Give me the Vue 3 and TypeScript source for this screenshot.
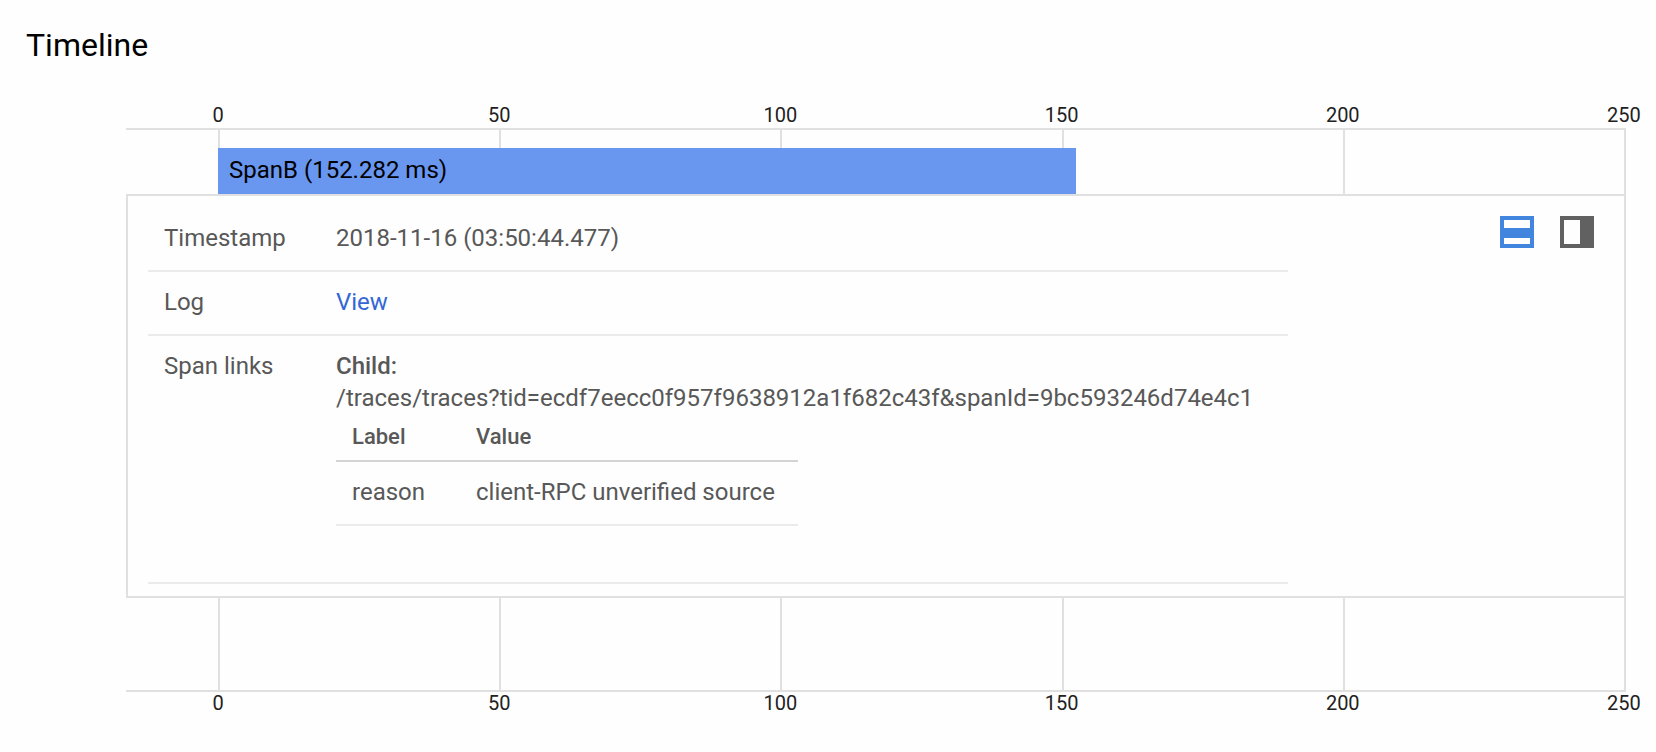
<script setup lang="ts">
import { computed, ref } from 'vue'

type DetailView = 'inline' | 'side'

interface LinkAttribute {
  label: string
  value: string
}

const axisMax = 250
const ticks: number[] = [0, 50, 100, 150, 200, 250]

const span = {
  name: 'SpanB',
  duration: 152.282,
  timestamp: '2018-11-16 (03:50:44.477)',
  link: '/traces/traces?tid=ecdf7eecc0f957f9638912a1f682c43f&spanId=9bc593246d74e4c1',
}

const attributes: LinkAttribute[] = [
  { label: 'reason', value: 'client-RPC unverified source' },
]

const view = ref<DetailView>('inline')
const barWidth = computed(() => `${(span.duration / axisMax) * 100}%`)
</script>

<template>
  <main class="page">
    <h1 class="title">Timeline</h1>

    <section class="chart" aria-label="Span timeline">
      <div class="axis axis-top">
        <span v-for="tick in ticks" :key="tick" class="tick">{{ tick }}</span>
      </div>

      <div class="plot">
        <div class="gridlines" aria-hidden="true">
          <div v-for="tick in ticks.slice(1)" :key="tick" class="gridcell"></div>
        </div>

        <div class="lanes">
          <div class="lane">
            <button type="button" class="bar" :style="{ width: barWidth }">
              {{ span.name }} ({{ span.duration }} ms)
            </button>
          </div>

          <div class="panel">
            <table class="details">
              <tbody>
                <tr>
                  <th scope="row">Timestamp</th>
                  <td>{{ span.timestamp }}</td>
                </tr>
                <tr>
                  <th scope="row">Log</th>
                  <td><a href="#log">View</a></td>
                </tr>
                <tr>
                  <th scope="row">Span links</th>
                  <td>
                    <strong class="relation">Child:</strong>
                    <div>{{ span.link }}</div>
                    <table class="attributes">
                      <thead>
                        <tr>
                          <th scope="col">Label</th>
                          <th scope="col">Value</th>
                        </tr>
                      </thead>
                      <tbody>
                        <tr v-for="item in attributes" :key="item.label">
                          <td>{{ item.label }}</td>
                          <td>{{ item.value }}</td>
                        </tr>
                      </tbody>
                    </table>
                  </td>
                </tr>
              </tbody>
            </table>

            <div class="views">
              <button
                type="button"
                class="view"
                :class="{ active: view === 'inline' }"
                :aria-pressed="view === 'inline'"
                aria-label="Show details inline"
                @click="view = 'inline'"
              >
                <svg width="34" height="32" viewBox="0 0 34 32" aria-hidden="true">
                  <path fill="currentColor" fill-rule="evenodd" d="M0 0h34v32H0zM4 4v8h26V4zM4 22v6h26v-6z" />
                </svg>
              </button>
              <button
                type="button"
                class="view"
                :class="{ active: view === 'side' }"
                :aria-pressed="view === 'side'"
                aria-label="Show details at the side"
                @click="view = 'side'"
              >
                <svg width="34" height="32" viewBox="0 0 34 32" aria-hidden="true">
                  <path fill="currentColor" fill-rule="evenodd" d="M0 0h34v32H0zM4 4v24h16V4z" />
                </svg>
              </button>
            </div>
          </div>
        </div>
      </div>

      <div class="axis axis-bottom">
        <span v-for="tick in ticks" :key="tick" class="tick">{{ tick }}</span>
      </div>
    </section>
  </main>
</template>

<style>
body {
  margin: 0;
  background: #fefefe;
}
</style>

<style scoped>
.page {
  padding: 24px 30px 32px 26px;
  font-family: Roboto, "Liberation Sans", sans-serif;
  font-size: 24px;
  line-height: 32px;
  color: #585858;
}

.title {
  margin: 0;
  font-size: 32px;
  font-weight: 400;
  line-height: 42px;
  color: #000;
}

.chart {
  margin: 38px 0 0 100px;
}

.axis {
  display: flex;
  justify-content: space-between;
  padding: 0 2px 0 92px;
  font-size: 20px;
  line-height: 22px;
  color: #212121;
}

.axis-top {
  padding-bottom: 2px;
}

.tick {
  display: flex;
  justify-content: center;
  width: 0;
}

/* Grid lines and lanes share one cell so the lanes are drawn over the lines. */
.plot {
  display: grid;
  grid-template-columns: minmax(0, 1fr);
  border: solid #e0e0e0;
  border-width: 2px 2px 2px 0;
}

.gridlines,
.lanes {
  grid-area: 1 / 1;
}

.gridlines {
  display: grid;
  grid-template-columns: repeat(5, 1fr);
  padding-left: 92px;
}

.gridcell {
  border-left: 2px solid #e0e0e0;
}

.lanes {
  z-index: 1;
  padding: 18px 0 92px;
}

.lane {
  display: flex;
  margin-right: -2px;
  padding-left: 92px;
}

.bar {
  height: 46px;
  padding: 0 0 2px 11px;
  border: 0;
  background: #6996ee;
  color: #000;
  font: inherit;
  text-align: left;
  white-space: nowrap;
  cursor: pointer;
}

.panel {
  display: flex;
  align-items: flex-start;
  justify-content: space-between;
  gap: 212px;
  padding: 12px 30px 12px 20px;
  border: solid #e0e0e0;
  border-width: 2px 0 2px 2px;
  background: #fefefe;
}

table {
  border-collapse: separate;
  border-spacing: 0;
}

th,
td {
  padding: 14px 16px 16px;
  border-bottom: 2px solid #ebebeb;
  font-weight: 400;
  text-align: left;
  vertical-align: top;
}

.details {
  flex: 1;
}

.details > tbody > tr > th {
  box-sizing: border-box;
  width: 172px;
  white-space: nowrap;
}

a {
  color: #3367d6;
  text-decoration: none;
}

.relation {
  font-weight: 500;
}

.attributes {
  min-width: 462px;
  margin-bottom: 40px;
}

.attributes th {
  padding: 9px 16px;
  border-bottom-color: #d4d4d4;
  font-size: 22px;
  font-weight: 500;
  line-height: 28px;
}

.attributes th:first-child {
  box-sizing: border-box;
  width: 124px;
}

.views {
  display: flex;
  gap: 26px;
  padding-top: 8px;
}

.view {
  display: flex;
  padding: 0;
  border: 0;
  background: none;
  color: #616161;
  cursor: pointer;
}

.view.active {
  color: #4285de;
}
</style>
